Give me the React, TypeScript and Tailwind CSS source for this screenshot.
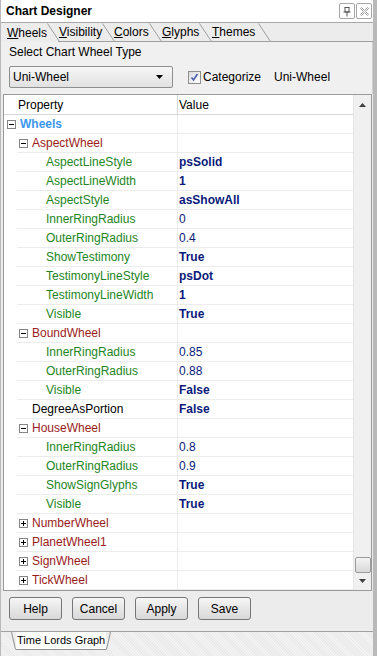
import React from 'react'

type Row = {
  label: string
  kind: 'root' | 'cat' | 'prop' | 'plain'
  open?: boolean
  value?: string
  bold?: boolean
}

const rows: Row[] = [
  { label: 'Wheels', kind: 'root', open: true },
  { label: 'AspectWheel', kind: 'cat', open: true },
  { label: 'AspectLineStyle', kind: 'prop', value: 'psSolid', bold: true },
  { label: 'AspectLineWidth', kind: 'prop', value: '1', bold: true },
  { label: 'AspectStyle', kind: 'prop', value: 'asShowAll', bold: true },
  { label: 'InnerRingRadius', kind: 'prop', value: '0' },
  { label: 'OuterRingRadius', kind: 'prop', value: '0.4' },
  { label: 'ShowTestimony', kind: 'prop', value: 'True', bold: true },
  { label: 'TestimonyLineStyle', kind: 'prop', value: 'psDot', bold: true },
  { label: 'TestimonyLineWidth', kind: 'prop', value: '1', bold: true },
  { label: 'Visible', kind: 'prop', value: 'True', bold: true },
  { label: 'BoundWheel', kind: 'cat', open: true },
  { label: 'InnerRingRadius', kind: 'prop', value: '0.85' },
  { label: 'OuterRingRadius', kind: 'prop', value: '0.88' },
  { label: 'Visible', kind: 'prop', value: 'False', bold: true },
  { label: 'DegreeAsPortion', kind: 'plain', value: 'False', bold: true },
  { label: 'HouseWheel', kind: 'cat', open: true },
  { label: 'InnerRingRadius', kind: 'prop', value: '0.8' },
  { label: 'OuterRingRadius', kind: 'prop', value: '0.9' },
  { label: 'ShowSignGlyphs', kind: 'prop', value: 'True', bold: true },
  { label: 'Visible', kind: 'prop', value: 'True', bold: true },
  { label: 'NumberWheel', kind: 'cat' },
  { label: 'PlanetWheel1', kind: 'cat' },
  { label: 'SignWheel', kind: 'cat' },
  { label: 'TickWheel', kind: 'cat' },
]

// tab widths measured from the left edge of each label to the next one
const tabs: [string, number][] = [
  ['Wheels', 52],
  ['Visibility', 55],
  ['Colors', 48],
  ['Glyphs', 50],
  ['Themes', 60],
]

function clsx(...a: (string | false | undefined)[]) {
  return a.filter(Boolean).join(' ')
}

function Toggle({ open }: { open?: boolean }) {
  return (
    <span className="flex h-[9px] w-[9px] shrink-0 items-center justify-center border border-[#848484] bg-white">
      <svg width="7" height="7" viewBox="0 0 7 7">
        <path d="M1 3.5h5" stroke="#000" strokeWidth="1" />
        {!open && <path d="M3.5 1v5" stroke="#000" strokeWidth="1" />}
      </svg>
    </span>
  )
}

function GridRow({ row }: { row: Row }) {
  let labelCell: React.ReactNode
  if (row.kind === 'root') {
    labelCell = <span className="ml-[1px] font-bold text-[#3b97f0]">{row.label}</span>
  } else if (row.kind === 'cat') {
    labelCell = (
      <span className="flex items-center gap-[4px] text-[#9a1b1b]">
        <Toggle open={row.open} />
        {row.label}
      </span>
    )
  } else if (row.kind === 'prop') {
    labelCell = <span className="pl-[27px] text-[#238523]">{row.label}</span>
  } else {
    labelCell = <span className="pl-[13px] text-black">{row.label}</span>
  }

  return (
    <div className="flex h-[19px]">
      <div className="flex w-[13px] items-center justify-center pl-[1px]">
        {row.kind === 'root' && <Toggle open={row.open} />}
      </div>
      <div className="flex w-[160px] items-center border-b border-[#ececec] pl-[2px]">{labelCell}</div>
      <div className="w-px bg-[#ececec]" />
      <div
        className={clsx(
          'flex w-[175px] items-center border-b border-[#ececec] pl-[1px] text-[#0a1a7a]',
          row.bold && 'font-bold',
        )}
      >
        {row.value}
      </div>
    </div>
  )
}

export default function App() {
  return (
    <div className="flex h-[656px] w-[377px] flex-col overflow-hidden border-r-[4px] border-l border-[#b9b9b9] bg-[#ececec] font-['Liberation_Sans',Arial,sans-serif] text-[12px] text-black">
      {/* title */}
      <div className="flex h-[23px] shrink-0 items-center justify-between border-b border-[#a9a9a9] bg-white pl-[5px] pr-[1px]">
        <span className="font-bold">Chart Designer</span>
        <div className="flex gap-[1px]">
          <span className="flex h-[16px] w-[16px] items-center justify-center rounded-[2px] border border-[#a6a6a6]">
            <svg width="10" height="11" viewBox="0 0 10 11">
              <path d="M2.5 1.5h5M3 1.5v4.5h4V1.5M1.5 6h7M5 6v4.5" stroke="#555" fill="none" />
            </svg>
          </span>
          <span className="flex h-[16px] w-[16px] items-center justify-center rounded-[2px] border border-[#a6a6a6]">
            <svg width="11" height="11" viewBox="0 0 11 11">
              <path
                d="M1.5 2.5l1-1 3 3 3-3 1 1-3 3 3 3-1 1-3-3-3 3-1-1 3-3z"
                stroke="#9a9a9a"
                fill="none"
                strokeLinejoin="round"
              />
            </svg>
          </span>
        </div>
      </div>

      {/* tabs */}
      <div className="flex h-[19px] shrink-0 items-end pl-[5px]">
        {tabs.map(([t, w], i) => (
          <div
            key={t}
            style={{ width: w }}
            className={clsx('flex h-[19px] shrink-0 items-end', i > 0 && 'border-b border-[#a0a0a0]')}
          >
            <span className="h-[18px] pl-[1px] leading-[18px]">
              <span className="underline">{t[0]}</span>
              {t.slice(1)}
            </span>
            <div className="flex-1" />
            <svg width="13" height="19" viewBox="0 0 13 19" className="shrink-0 self-start">
              <path d="M0.5 0.5L12.5 18.5" stroke="#a0a0a0" fill="none" />
            </svg>
          </div>
        ))}
        <div className="h-[19px] flex-1 border-b border-[#a0a0a0]" />
      </div>

      {/* panel */}
      <div className="flex h-[52px] shrink-0 flex-col border-r border-[#cfcfcf] bg-[#f0f0f0] pl-[8px]">
        <span className="mt-[3px] leading-[14px]">Select Chart Wheel Type</span>
        <div className="mt-[7px] flex items-center">
          <div className="flex h-[22px] w-[164px] items-center justify-between rounded-[2px] border border-[#8e8f8f] bg-gradient-to-b from-[#f7f7f7] to-[#e1e1e1] pl-[3px] pr-[9px]">
            <span>Uni-Wheel</span>
            <svg width="7" height="4" viewBox="0 0 7 4">
              <path d="M0 0h7L3.5 4z" fill="#000" />
            </svg>
          </div>
          <span className="ml-[15px] flex h-[13px] w-[13px] items-center justify-center border border-[#8f8f8f] bg-gradient-to-br from-[#dcdcdc] to-white">
            <svg width="9" height="9" viewBox="0 0 9 9">
              <path d="M1.5 4.5l2 2.5 4-6" stroke="#4a5fb0" strokeWidth="1.6" fill="none" />
            </svg>
          </span>
          <span className="ml-[2px]">Categorize</span>
          <span className="ml-[13px]">Uni-Wheel</span>
        </div>
      </div>

      {/* property grid */}
      <div className="mr-[1px] ml-[2px] flex h-[497px] shrink-0 border border-[#9a9a9a] bg-white">
        <div className="flex flex-col">
          <div className="flex h-[20px] border-b border-[#d6d6d6]">
            <div className="flex w-[173px] items-center pl-[14px]">Property</div>
            <div className="w-px bg-[#d6d6d6]" />
            <div className="flex w-[175px] items-center pl-[1px]">Value</div>
          </div>
          {rows.map((r, i) => (
            <GridRow key={i} row={r} />
          ))}
        </div>
        <div className="flex w-[18px] flex-col items-center border-l border-[#e6e6e6] bg-[#f0f0f0]">
          <svg width="7" height="4" viewBox="0 0 7 4" className="mt-[8px]">
            <path d="M3.5 0L7 4H0z" fill="#404040" />
          </svg>
          <div className="flex-1" />
          <div className="mb-[6px] h-[16px] w-[16px] rounded-[2px] border border-[#9a9a9a] bg-gradient-to-b from-[#f4f4f4] to-[#d9d9d9]" />
          <svg width="7" height="4" viewBox="0 0 7 4" className="mb-[7px]">
            <path d="M0 0h7L3.5 4z" fill="#404040" />
          </svg>
        </div>
      </div>

      {/* buttons */}
      <div className="flex shrink-0 gap-[10px] pt-[6px] pl-[8px]">
        {['Help', 'Cancel', 'Apply', 'Save'].map((b) => (
          <button
            key={b}
            className="flex h-[23px] w-[53px] items-center justify-center rounded-[3px] border border-[#777] bg-gradient-to-b from-[#f6f6f6] to-[#d8d8d8]"
          >
            {b}
          </button>
        ))}
      </div>

      {/* bottom tabs */}
      <div className="mt-[11px] flex flex-1 border-t border-[#a0a0a0] bg-[repeating-linear-gradient(45deg,#f3f3f3_0px,#f3f3f3_1px,#eaeaea_1px,#eaeaea_2px)] pl-[10px]">
        <div className="flex h-[18px] items-start">
          <svg width="5" height="18" viewBox="0 0 5 18">
            <path d="M0.5 0L4.5 17.5" stroke="#909090" fill="none" />
          </svg>
          <span className="h-[18px] border-b border-[#909090] bg-white px-[1px] pt-[1px] text-[11px] leading-[15px]">
            Time Lords Graph
          </span>
          <svg width="5" height="18" viewBox="0 0 5 18">
            <path d="M4.5 0L0.5 17.5" stroke="#909090" fill="none" />
          </svg>
        </div>
      </div>
    </div>
  )
}
